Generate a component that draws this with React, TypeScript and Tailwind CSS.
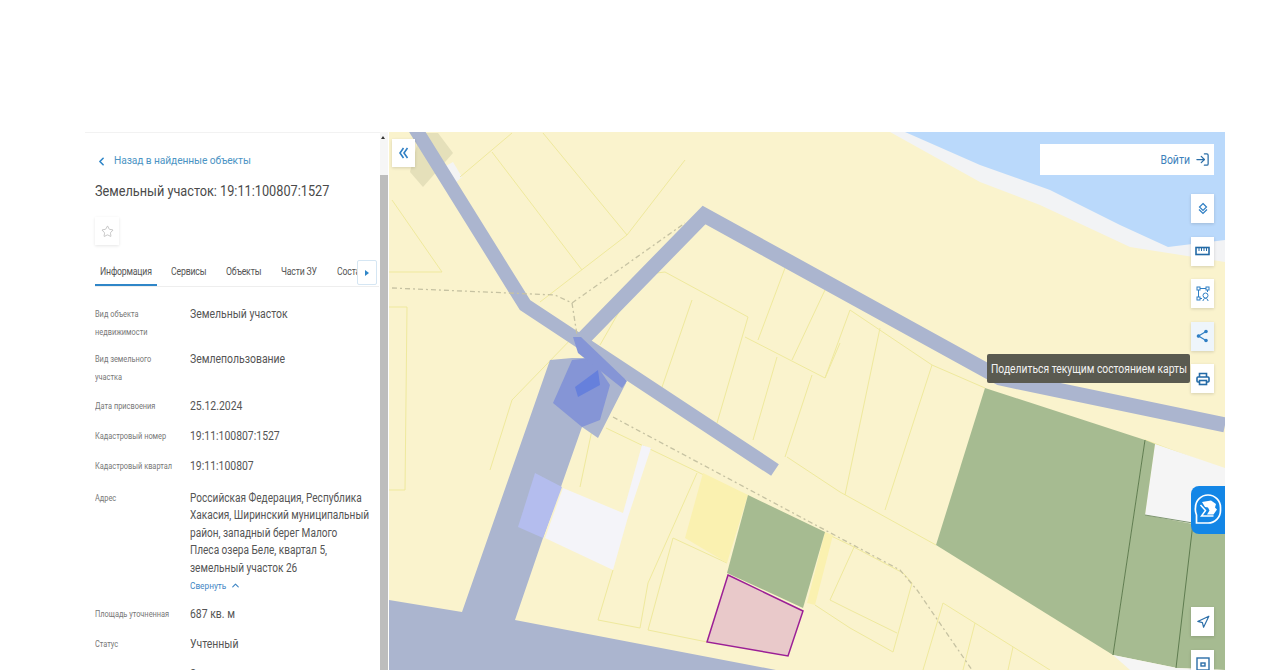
import React from "react";
import { ChevronLeft, ChevronUp, LogIn, Navigation, Star } from "lucide-react";

const rows = [
  { label: ["Вид объекта", "недвижимости"], value: "Земельный участок", space: "mt-0" },
  { label: ["Вид земельного", "участка"], value: "Землепользование", space: "mt-[10px]" },
  { label: ["Дата присвоения"], value: "25.12.2024", space: "mt-[12px]" },
  { label: ["Кадастровый номер"], value: "19:11:100807:1527", space: "mt-[12px]" },
  { label: ["Кадастровый квартал"], value: "19:11:100807", space: "mt-[13px]" },
];

const address = [
  "Российская Федерация, Республика",
  "Хакасия, Ширинский муниципальный",
  "район, западный берег Малого",
  "Плеса озера Беле, квартал 5,",
  "земельный участок 26",
];

const parcelLines = [
  "512,133 460,177",
  "492,152 582,270",
  "543,133 627,235",
  "627,235 540,302",
  "627,235 685,160",
  "392,200 442,272 389,272",
  "389,307 407,307 405,490 389,490",
  "577,333 512,400 490,470",
  "600,345 640,275 665,272 748,317 717,423",
  "692,300 660,393",
  "745,337 825,378 840,343",
  "785,268 758,340",
  "825,290 792,360",
  "850,310 825,378",
  "850,310 932,365 985,388",
  "777,357 753,440",
  "812,375 785,457",
  "880,328 845,495",
  "932,365 885,510",
  "787,457 840,492 936,545",
  "606,428 850,545 903,573 912,583 893,652 850,628",
  "580,487 592,430",
  "697,473 648,583 640,628 598,620 613,570",
  "673,538 648,630 707,642",
  "673,538 727,563",
  "850,610 897,633",
  "815,605 850,628",
  "855,545 830,600 850,610",
  "943,603 1050,670",
  "943,603 923,670",
  "975,623 963,670",
  "1013,647 1008,670",
  "1145,440 1225,470",
];

function MapDrawing() {
  return (
    <svg className="absolute inset-0 h-full w-full" viewBox="389 132 836 538" preserveAspectRatio="none">
      <rect x="389" y="132" width="836" height="538" fill="#faf3cd" />
      <polygon points="890,132 1225,132 1225,262 1200,258 1130,247 1040,205 980,182" fill="#f2f3f5" />
      <polygon points="905,132 1225,132 1225,240 1168,247 1120,225 1050,190 980,165" fill="#bad9fb" />

      <polygon points="420,133 438,133 453,153 423,187 410,172" fill="#e5e0ba" />
      <polygon points="442,168 453,162 462,177 453,185" fill="#f4f4f4" />

      {parcelLines.map((points) => (
        <polyline key={points} points={points} fill="none" stroke="#efe99d" strokeWidth="1" />
      ))}

      <polygon points="703,473 748,495 727,563 685,538" fill="#faf1b0" />
      <polygon points="825,532 833,535 815,605 807,603" fill="#faf1b0" />
      <polygon points="563,488 623,513 642,445 651,448 628,517 613,570 545,538" fill="#f4f4f9" />
      <polygon points="748,495 825,532 803,608 727,573" fill="#a6bb91" />
      <polygon
        points="728,575 803,611 788,656 707,642"
        fill="#e9c9ca"
        stroke="#9b1f96"
        strokeWidth="1.5"
      />

      <polygon points="985,388 1145,440 1113,655 936,545" fill="#a6bb91" />
      <polygon points="1155,444 1225,468 1225,530 1145,515" fill="#f5f5f5" />
      <polygon points="1145,440 1155,444 1145,515 1225,530 1225,670 1177,668 1113,655" fill="#a6bb91" />
      <polygon points="1113,655 1177,668 1225,670 1130,670" fill="#f5f5f5" />
      <polyline points="1145,440 1113,655" fill="none" stroke="#5f7c50" strokeWidth="1" />
      <polyline points="1193,523 1176,668" fill="none" stroke="#5f7c50" strokeWidth="1" />
      <polyline points="1145,515 1193,523" fill="none" stroke="#7d9570" strokeWidth="1" />

      <g fill="none" stroke="#abb5cf">
        <polyline points="413,125 525,305 775,470" strokeWidth="14" />
        <polyline points="579,343 704,215 1000,378 1225,425" strokeWidth="15" />
      </g>
      <polygon
        points="550,360 572,358 600,358 626,383 598,438 582,427 543,538 515,620 776,670 389,670 389,600 462,612"
        fill="#abb5cf"
      />
      <polygon points="535,473 562,487 543,538 518,527" fill="#b4bdee" />
      <polygon points="553,403 572,360 590,358 600,370 610,385 600,420 582,427" fill="#8595d6" />
      <polygon points="573,337 581,337 627,381 622,388 578,353" fill="#8595d6" />
      <polygon points="575,387 598,370 600,385 578,397" fill="#6680dc" />

      <g fill="none" stroke="#c6c2a2" strokeWidth="1.3" strokeDasharray="5 3 2 3">
        <polyline points="392,288 555,295 572,303 685,223" />
        <polyline points="572,303 577,335" />
        <polyline points="613,417 900,570 917,590 972,670" />
      </g>
    </svg>
  );
}

function MapButton({ children, active }: { children: React.ReactNode; active?: boolean }) {
  return (
    <button
      className={`flex h-[29px] w-[23px] items-center justify-center shadow-[0_1px_3px_rgba(0,0,0,0.15)] ${
        active ? "bg-[#eef5fb]" : "bg-white"
      }`}
    >
      {children}
    </button>
  );
}

function BlueLogo() {
  return (
    <svg width="30" height="36" viewBox="0 0 30 36">
      <path
        d="M15 3a12.500 12.500 0 0 1 12.500 12.500v3A12.500 12.500 0 0 1 15 31H3.500v-8A14 14 0 0 1 2.500 15.500A12.500 12.500 0 0 1 15 3z"
        fill="none"
        stroke="#fff"
        strokeWidth="1.7"
      />
      <path d="M9 10l9-1.500l5 3.500l-1 3.500l2 2l-3.500 5H14l2.500-4l-1.500-3l-3-.5z" fill="#fff" />
      <path d="M7.500 13l5 5.500l-4 5.500h12" fill="none" stroke="#fff" strokeWidth="1.500" />
    </svg>
  );
}

// the reference is squeezed horizontally, so text is narrowed from its left edge
function Narrow({ children }: { children: React.ReactNode }) {
  return <span className="inline-block origin-left scale-x-[0.87] whitespace-nowrap">{children}</span>;
}

export default function App() {
  return (
    <div
      className="flex h-[670px] overflow-hidden bg-white pl-[85px] pr-[55px] pt-[132px] text-[#555]"
      style={{ fontFamily: "Roboto, 'Liberation Sans', sans-serif" }}
    >
      <aside className="w-[295px] shrink-0 border-t border-[#f2f2f2] pl-[10px]">
        <div className="flex items-center pt-[20px] text-[11px] leading-[16px] tracking-[-0.1px] text-[#4b94c4]">
          <ChevronLeft className="mr-[6px] h-[13px] w-[13px] text-[#2f86c8]" strokeWidth={3} />
          <span className="inline-block origin-left scale-x-[0.93] whitespace-nowrap">Назад в найденные объекты</span>
        </div>
        <h1 className="mt-[12px] text-[15.500px] font-normal leading-[20px] text-[#4a4a4a]">
          <span className="inline-block origin-left scale-x-[0.82] whitespace-nowrap">
            Земельный участок: 19:11:100807:1527
          </span>
        </h1>
        <div className="mt-[16px] flex h-[28px] w-[24px] items-center justify-center shadow-[0_1px_3px_rgba(0,0,0,0.1)]">
          <Star className="h-[13px] w-[13px] text-[#aaa]" strokeWidth={1.2} />
        </div>

        <div className="relative mt-[14px] flex h-[28px] w-[284px] overflow-hidden border-b border-[#eee] text-[10px] leading-[26px] tracking-[-0.2px] text-[#555]">
          <span className="h-[27px] w-[62px] shrink-0 border-b-2 border-[#2f86c8] pl-[5px]">
            <Narrow>Информация</Narrow>
          </span>
          <span className="ml-[14px] shrink-0">
            <Narrow>Сервисы</Narrow>
          </span>
          <span className="ml-[14px] shrink-0">
            <Narrow>Объекты</Narrow>
          </span>
          <span className="ml-[15px] shrink-0">
            <Narrow>Части ЗУ</Narrow>
          </span>
          <span className="ml-[15px] shrink-0">
            <Narrow>Состав</Narrow>
          </span>
          <span className="absolute right-[2px] top-[1px] flex h-[25px] w-[20px] items-center justify-center rounded-[2px] border border-[#d5e6f3] bg-white">
            <span className="h-0 w-0 border-y-[3px] border-l-[4px] border-y-transparent border-l-[#2f86c8]" />
          </span>
        </div>

        <div className="mt-[19px] text-[12px] leading-[17.5px]">
          {rows.map((row) => (
            <div key={row.value} className={`grid grid-cols-[95px_1fr] ${row.space}`}>
              <div className="text-[8.5px] text-[#777]">
                {row.label.map((line) => (
                  <div key={line}>
                    <Narrow>{line}</Narrow>
                  </div>
                ))}
              </div>
              <div>
                <Narrow>{row.value}</Narrow>
              </div>
            </div>
          ))}

          <div className="mt-[14px] grid grid-cols-[95px_1fr]">
            <div className="text-[8.5px] text-[#777]">
              <Narrow>Адрес</Narrow>
            </div>
            <div>
              {address.map((line) => (
                <div key={line}>
                  <span className="inline-block origin-left scale-x-[0.84] whitespace-nowrap">{line}</span>
                </div>
              ))}
              <div className="flex items-center text-[9.500px] text-[#3f86c4]">
                <span className="w-[40px] underline">
                  <Narrow>Свернуть</Narrow>
                </span>
                <ChevronUp className="h-[11px] w-[11px]" strokeWidth={2.5} />
              </div>
            </div>
          </div>

          <div className="mt-[11px] grid grid-cols-[95px_1fr]">
            <div className="text-[8.5px] text-[#777]">
              <Narrow>Площадь уточненная</Narrow>
            </div>
            <div>
              <Narrow>687 кв. м</Narrow>
            </div>
          </div>
          <div className="mt-[13px] grid grid-cols-[95px_1fr]">
            <div className="text-[8.5px] text-[#777]">
              <Narrow>Статус</Narrow>
            </div>
            <div>
              <Narrow>Учтенный</Narrow>
            </div>
          </div>
          <div className="mt-[12px] grid grid-cols-[95px_1fr]">
            <div className="text-[8.5px] text-[#777]">
              <Narrow>Категория земель</Narrow>
            </div>
            <div>
              <Narrow>Земли населенных пунктов</Narrow>
            </div>
          </div>
        </div>
      </aside>

      <div className="relative h-[538px] w-[8px] shrink-0 bg-[#f6f6f6]">
        <span className="absolute left-[1px] top-[4px] h-0 w-0 border-x-[2px] border-b-[3px] border-x-transparent border-b-[#333]" />
        <div className="absolute inset-x-0 bottom-0 top-[43px] bg-[#bdbdbd]" />
      </div>

      <main className="relative ml-[1px] h-[538px] flex-1 overflow-hidden">
        <MapDrawing />

        <button className="absolute left-[3px] top-[7px] flex h-[28px] w-[23px] items-center justify-center bg-white shadow-[0_1px_3px_rgba(0,0,0,0.15)]">
          <svg width="11" height="14" viewBox="0 0 11 14" fill="none" stroke="#2f7fc4" strokeWidth="1.600">
            <path d="M5.500 2L2 7l3.500 5M9.500 2L6 7l3.500 5" />
          </svg>
        </button>

        <div className="absolute left-[651px] top-[12px] flex h-[31px] w-[174px] items-center justify-end bg-white pr-[4px] text-[12px] text-[#3d7fbb]">
          <span className="mr-[5px] inline-block origin-right scale-x-[0.87]">Войти</span>
          <LogIn className="h-[15px] w-[15px] text-[#2b6ea8]" strokeWidth={2} />
        </div>

        <div className="absolute left-[802px] top-[62px] flex flex-col gap-[13.5px]">
          <MapButton>
            <svg width="12" height="13" viewBox="0 0 12 13" fill="none" stroke="#2f7fc4" strokeWidth="1.2">
              <path d="M6 1.500l3.500 3.500L6 8.500L2.500 5z" />
              <path d="M2 7.500L6 11.500l4-4" />
            </svg>
          </MapButton>
          <MapButton>
            <svg width="15" height="10" viewBox="0 0 15 10" fill="none" stroke="#236aa6" strokeWidth="1.6">
              <rect x="1" y="1.500" width="13" height="7" />
              <path d="M4 1.500v3.500M6.500 1.500v3.500M9 1.500v3.500M11.500 1.500v3.500" strokeWidth="1" />
            </svg>
          </MapButton>
          <MapButton>
            <svg width="14" height="16" viewBox="0 0 14 16" fill="none" stroke="#2f7fc4" strokeWidth="1">
              <rect x="1" y="1" width="3" height="3" />
              <rect x="10" y="1" width="3" height="3" />
              <rect x="1" y="11" width="3" height="3" />
              <path d="M4 2.500h6M2.500 4v7M11.500 4v2M4 12.500h2" />
              <circle cx="9.500" cy="9.500" r="2.500" />
              <path d="M7 15c0-1.500 1-2.500 2.500-2.500S12 13.500 12 15" />
            </svg>
          </MapButton>
          <MapButton active>
            <svg width="13" height="14" viewBox="0 0 13 14" fill="#2f7fc4" stroke="#2f7fc4" strokeWidth="1.2">
              <circle cx="10" cy="2.500" r="1.200" />
              <circle cx="2.500" cy="7" r="1.200" />
              <circle cx="10" cy="11.500" r="1.200" />
              <path d="M10 2.500L2.500 7l7.500 4.500" fill="none" />
            </svg>
          </MapButton>
          <MapButton>
            <svg width="14" height="14" viewBox="0 0 14 14" fill="none" stroke="#236aa6" strokeWidth="1.6">
              <path d="M3.500 5V1.500h7V5" />
              <rect x="1" y="5" width="12" height="5" rx="1" />
              <rect x="3.500" y="8.500" width="7" height="4" fill="#fff" />
            </svg>
          </MapButton>
        </div>

        <div className="absolute left-[598px] top-[222px] flex h-[29px] w-[203px] items-center rounded-[2px] bg-[#5a5a50] pl-[4px] text-[12px] text-[#f2f2f2]">
          <span className="inline-block origin-left scale-x-[0.86] whitespace-nowrap">
            Поделиться текущим состоянием карты
          </span>
        </div>

        <div className="absolute left-[802px] top-[354px] flex h-[48px] w-[34px] items-center justify-center rounded-l-[8px] bg-[#1386e6]">
          <BlueLogo />
        </div>

        <div className="absolute left-[802px] top-[475px] flex flex-col gap-[13.5px]">
          <MapButton>
            <Navigation className="h-[14px] w-[14px] text-[#2b6ea8]" strokeWidth={2} />
          </MapButton>
          <MapButton>
            <svg width="14" height="14" viewBox="0 0 14 14" fill="none" stroke="#2b6ea8" strokeWidth="1.4">
              <rect x="1" y="1" width="12" height="12" />
              <rect x="5" y="6" width="4" height="3" />
            </svg>
          </MapButton>
        </div>
      </main>
    </div>
  );
}
